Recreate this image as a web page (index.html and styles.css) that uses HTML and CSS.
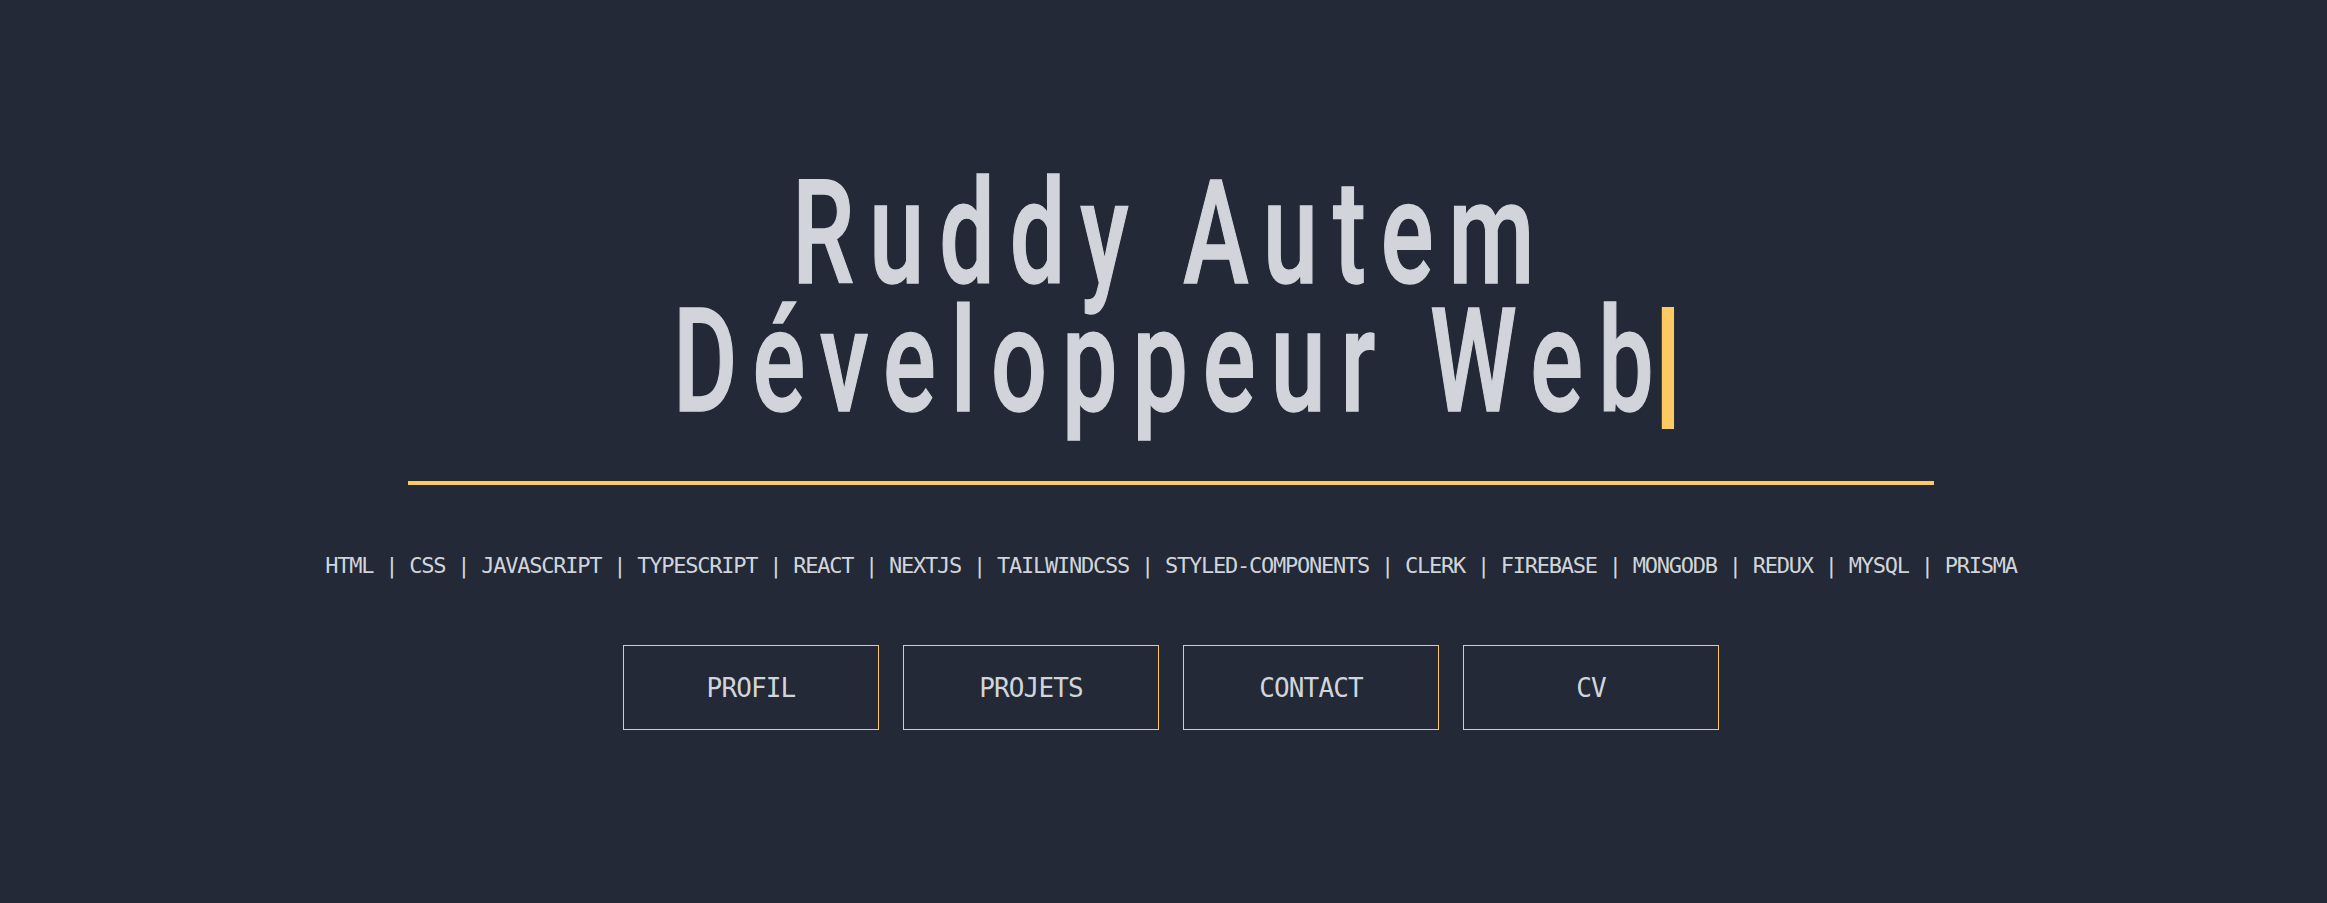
FILE: index.html
```html
<!DOCTYPE html>
<html lang="fr">
<head>
<meta charset="utf-8">
<title>Ruddy Autem - Développeur Web</title>
<link rel="stylesheet" href="styles.css">
</head>
<body>
<main class="hero">
  <h1 class="hero-title">
    <span class="title-line">Ruddy Autem</span>
    <span class="title-line">Développeur Web<span class="caret"></span></span>
  </h1>
  <hr class="divider">
  <p class="stack">HTML | CSS | JAVASCRIPT | TYPESCRIPT | REACT | NEXTJS | TAILWINDCSS | STYLED-COMPONENTS | CLERK | FIREBASE | MONGODB | REDUX | MYSQL | PRISMA</p>
  <nav class="actions">
    <a class="btn" href="#profil">PROFIL</a>
    <a class="btn" href="#projets">PROJETS</a>
    <a class="btn" href="#contact">CONTACT</a>
    <a class="btn" href="#cv">CV</a>
  </nav>
</main>
</body>
</html>
```
FILE: styles.css
```css
* { box-sizing: border-box; }
html, body {
  margin: 0;
  padding: 0;
  background: #232936;
}
body {
  min-height: 100vh;
  color: #d1d5db;
  font-family: "DejaVu Sans Mono", "Liberation Mono", monospace;
}
.hero {
  padding: 169px 0 0 15px;
  display: flex;
  flex-direction: column;
  align-items: center;
}
.hero-title {
  margin: 0;
  display: flex;
  flex-direction: column;
  align-items: center;
  font-family: "Roboto", "Liberation Sans", sans-serif;
  font-weight: 500;
  font-size: 145px;
  line-height: 128px;
  letter-spacing: 22.1px;
  color: #d1d5db;
  -webkit-text-stroke: 1.5px #d1d5db;
}
.title-line {
  display: block;
  white-space: nowrap;
  transform: scaleX(0.68);
}
.caret {
  display: inline-block;
  width: 18px;
  height: 122px;
  margin-left: -10px;
  margin-right: -9px;
  vertical-align: -18px;
  background: #fdc962;
}
.divider {
  width: 66%;
  height: 4px;
  margin: 52px 0 0;
  border: 0;
  background: #fdc962;
}
.stack {
  margin: 66px 0 0;
  font-size: 22px;
  line-height: 30px;
  letter-spacing: -1.25px;
  white-space: nowrap;
}
.actions {
  display: flex;
  gap: 24px;
  margin-top: 64px;
}
.btn {
  width: 256px;
  height: 85px;
  display: flex;
  align-items: center;
  justify-content: center;
  border: 1px solid #fdc962;
  color: #d1d5db;
  text-decoration: none;
  font-size: 26px;
  letter-spacing: -0.85px;
}
```
